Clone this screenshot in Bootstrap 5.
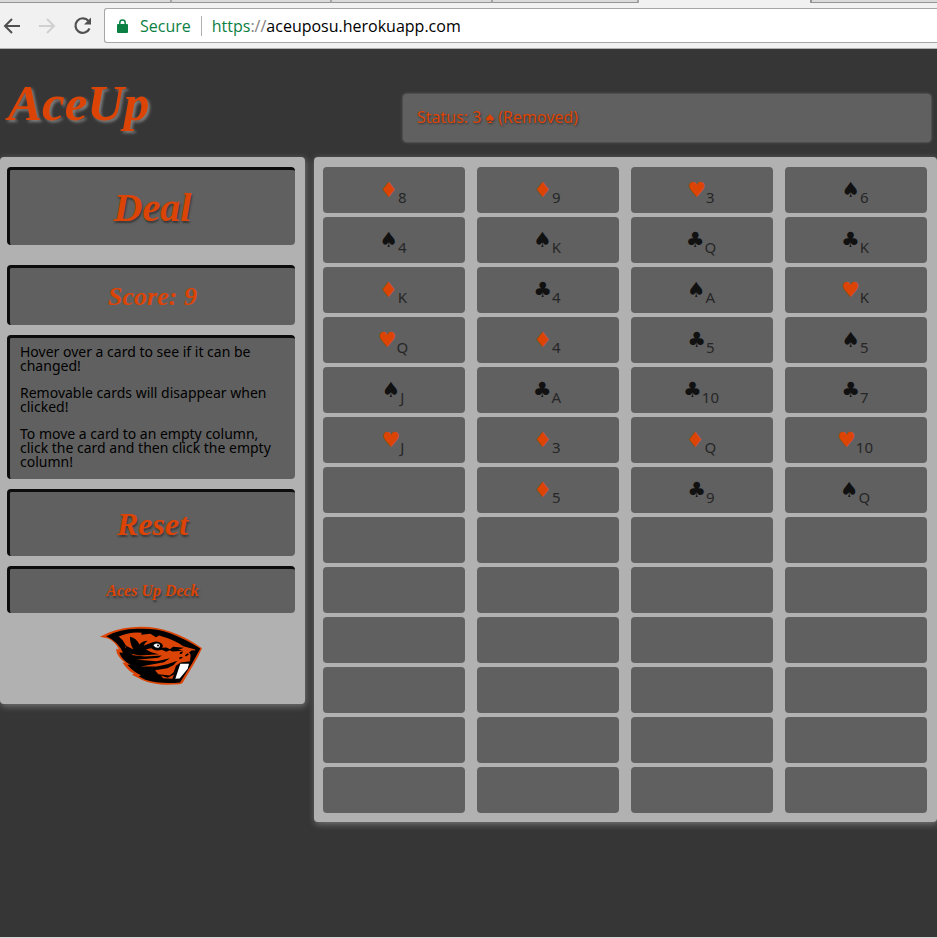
<!DOCTYPE html>
<html lang="en">
<head>
<meta charset="utf-8">
<meta name="viewport" content="width=device-width, initial-scale=1">
<title>AceUp</title>
<link href="https://cdn.jsdelivr.net/npm/bootstrap@5.3.0/dist/css/bootstrap.min.css" rel="stylesheet">
<style>
:root { --ace-orange: #dc4405; --ace-dark: #363636; --ace-mid: #606060; --ace-light: #b1b1b1; }
body { background: var(--ace-dark); font-family: "Noto Sans", "Open Sans", sans-serif; color: #000; border-bottom: 1px solid #d8d8d8; }
.script-face { font-family: "Liberation Serif", serif; font-weight: 700; font-style: italic; color: var(--ace-orange); line-height: 1; }

.browser-bar { background: #f1f1f1; border-bottom: 1px solid #b0b0b0; height: 49px; }
.tab-strip { height: 3px; }
.tab-edge { background: #dadada; border-bottom: 1px solid #959595; border-right: 2px solid #a5a5a5; flex: 160 1 0; }
.tab-first { flex-grow: 172; }
.tab-short { flex-grow: 146; }
.tab-live { flex: 173 1 0; }
.tab-last { flex-grow: 126; border-right: 0; border-left: 2px solid #959595; }
.tool-row { padding-top: 5px; }
.tool-btn { width: 35px; line-height: 0; }
.reload-btn { width: 34px; text-align: left; padding-left: 3px; }
.omnibox { height: 35px; border: 1px solid #a6a6a6; border-right: 0; border-radius: 3px 0 0 3px; font-family: "Open Sans", sans-serif; font-size: 16px; }
.secure-text { color: #0b8043; }
.url-rule { width: 1px; height: 20px; background: #b0b0b0; margin: 0 6px 0 10px; }
.url-link { color: #000; }
.url-slash { color: #808080; }

.top-row { height: 108px; }
.layout-grid { display: grid; grid-template-columns: 305fr 623fr; column-gap: 9px; }
.brand-name { font-size: 51px; text-shadow: 2px 2px 3px #808080; }
.status-wrap { padding: 0 6px 15px 89px; }
.status-box { background: var(--ace-mid); border-radius: 4px; color: var(--ace-orange); height: 48px; font-size: 16px; text-shadow: 1px 1px 2px #333; box-shadow: 0 0 3px #777; padding: 0 14px 2px; }
.panel { background: var(--ace-light); border-radius: 4px; box-shadow: 1px 2px 7px #777; }
.side-panel { padding: 10px 10px 19px 7px; }
.inset-box { background: var(--ace-mid); border: 0 solid #0c0c0c; border-top-width: 3px; border-left-width: 3px; border-radius: 4px; text-shadow: 1px 2px 2px #383838; margin-bottom: 10px; }
.deal-btn { height: 78px; font-size: 40px; margin-bottom: 20px; }
.score-box { height: 60px; font-size: 26px; text-shadow: none; }
.help-box { font-size: 14px; line-height: 14px; padding: 7px 8px 10px 10px; text-shadow: none; }
.help-box p { margin-bottom: 13px; }
.reset-btn { height: 67px; font-size: 32px; }
.deck-btn { height: 47px; font-size: 16px; margin-bottom: 13px; }
.board { display: grid; grid-template-columns: repeat(4, 1fr); gap: 4px 12px; padding: 10px 10px 9px 9px; }
.slot { background: var(--ace-mid); border: 0; border-radius: 4px; height: 46px; padding: 0 2px 0 0; color: #111; line-height: 46px; }
.suit { font-family: "DejaVu Sans", sans-serif; font-size: 21px; }
.suit-red { color: var(--ace-orange); }
.rank { font-size: 15px; color: #262626; bottom: -6px; }
</style>
</head>
<body class="min-vh-100">
<header class="browser-bar">
  <div class="tab-strip d-flex">
    <span class="tab-edge tab-first"></span><span class="tab-edge"></span><span class="tab-edge"></span><span class="tab-edge tab-short"></span><span class="tab-live"></span><span class="tab-edge tab-last"></span>
  </div>
  <div class="tool-row d-flex align-items-center">
    <button class="tool-btn btn p-0 border-0 text-start" aria-label="Back"><svg width="22" height="18" viewBox="0 0 22 18" fill="none" stroke="#505050" stroke-width="2"><path d="M20 9H5M12 2L5 9l7 7"/></svg></button>
    <button class="tool-btn btn p-0 border-0 text-start" aria-label="Forward"><svg width="22" height="18" viewBox="0 0 22 18" fill="none" stroke="#d0d0d0" stroke-width="2"><path d="M4 9h15M12 2l7 7-7 7"/></svg></button>
    <button class="reload-btn btn py-0 pe-0 border-0 lh-1" aria-label="Reload"><svg width="20" height="20" viewBox="0 0 20 20"><path d="M15.500 5A7.300 7.300 0 1 0 16.500 12.500" fill="none" stroke="#505050" stroke-width="2.200"/><path d="M18 1.500v7h-7z" fill="#505050"/></svg></button>
    <div class="omnibox bg-white flex-grow-1 d-flex align-items-center ps-2">
      <svg class="mx-1" width="11" height="14" viewBox="0 0 11 14"><path d="M2.800 6V3.700a2.700 2.700 0 0 1 5.400 0V6" fill="none" stroke="#0b8043" stroke-width="1.500"/><rect y="5" width="11" height="9" rx="1" fill="#0b8043"/></svg>
      <span class="secure-text ms-1 ps-1">Secure</span>
      <span class="url-rule"></span>
      <a class="url-link text-decoration-none ps-1" href="https://aceuposu.herokuapp.com"><span class="secure-text">https</span><span class="url-slash">://</span>aceuposu.herokuapp.com</a>
    </div>
  </div>
</header>

<main>
  <div class="top-row layout-grid">
    <h1 class="brand-name script-face m-0 ps-2 align-self-center">AceUp</h1>
    <div class="status-wrap d-flex align-items-end">
      <div class="status-box flex-grow-1 d-flex align-items-center" role="status">Status: 3&nbsp;♠&nbsp;(Removed)</div>
    </div>
  </div>
  <div class="layout-grid align-items-start">
    <aside class="panel side-panel d-flex flex-column">
      <button class="inset-box deal-btn script-face">Deal</button>
      <div class="inset-box score-box script-face d-flex align-items-center justify-content-center">Score: 9</div>
      <div class="inset-box help-box">
        <p>Hover over a card to see if it can be changed!</p>
        <p>Removable cards will disappear when clicked!</p>
        <p class="mb-0">To move a card to an empty column, click the card and then click the empty column!</p>
      </div>
      <button class="inset-box reset-btn script-face">Reset</button>
      <button class="inset-box deck-btn script-face">Aces Up Deck</button>
      <svg class="align-self-center" width="102" height="59" viewBox="30 33 306 176" role="img" aria-label="Beaver logo">
        <path d="M30 65Q75 39 125 36Q190 31 240 49Q292 67 336 99Q325 125 309 151L277 204Q269 209 250 208Q196 211 158 195L126 179L132 176Q116 169 97 142L106 143Q80 126 78 101L87 103Q75 79 54 70Z" fill="#dc4405"/>
        <path d="M49 63Q90 42 140 41Q197 38 240 54Q288 72 331 100L306 145L270 202Q212 208 166 194L146 183L153 180Q130 171 112 149L121 149Q94 133 88 112L99 113Q86 80 49 63Z"/>
        <path d="M86 64Q125 48 155 53L154 59L181 56L198 66L207 61Q254 74 280 93L316 103L304 120L300 138L272 142L258 152L251 171L239 181L205 177L195 165L232 159L250 150L262 137L232 147L200 154L152 154L222 141L240 129L200 138L140 134L205 128L216 121L165 124L130 120L112 108L104 94L110 95L98 75Z" fill="#dc4405"/>
        <path d="M120 65Q139 69 148 88Q157 78 173 77Q163 84 161 92L180 84Q200 74 214 84Q222 91 216 98L229 97L240 102L249 95L282 98L265 104L279 107L248 109L239 105L229 110L215 104Q196 110 184 99L168 102Q180 112 207 117L150 121L104 112L108 92L130 103Q119 84 120 65Z"/>
        <path d="M190 90Q196 83 206 86Q213 91 207 97Q198 100 190 90Z" fill="#fff"/>
        <circle cx="204" cy="91" r="3"/>
        <path d="M270 111l9-3-3 8-7 1zM285 120l8-6 4 3-9 7zM267 128l8-3 3 3-9 4zM305 106l8-1-3 19-11 12q7-17-2-24z"/>
        <path d="M213 181L233 188L252 178L247 191L219 189Z" fill="#dc4405"/>
        <path d="M271 146L297 146L293 161L269 190L256 191Z" fill="#fff"/>
      </svg>
    </aside>
    <section class="panel board" id="board" aria-label="Card columns"></section>
  </div>
</main>
<script>
const rows = [
  "♦8 ♦9 ♥3 ♠6", "♠4 ♠K ♣Q ♣K", "♦K ♣4 ♠A ♥K", "♥Q ♦4 ♣5 ♠5",
  "♠J ♣A ♣10 ♣7", "♥J ♦3 ♦Q ♥10", "- ♦5 ♣9 ♠Q",
  "- - - -", "- - - -", "- - - -", "- - - -", "- - - -", "- - - -"
];
document.getElementById("board").innerHTML = rows.flatMap(r => r.split(" ")).map(c => {
  if (c === "-") return '<button class="slot" aria-label="Empty slot"></button>';
  const red = "♦♥".includes(c[0]) ? " suit-red" : "";
  return `<button class="slot"><span class="suit${red}">${c[0]}</span><sub class="rank">${c.slice(1)}</sub></button>`;
}).join("");
</script>
<script src="https://cdn.jsdelivr.net/npm/bootstrap@5.3.0/dist/js/bootstrap.bundle.min.js"></script>
</body>
</html>
